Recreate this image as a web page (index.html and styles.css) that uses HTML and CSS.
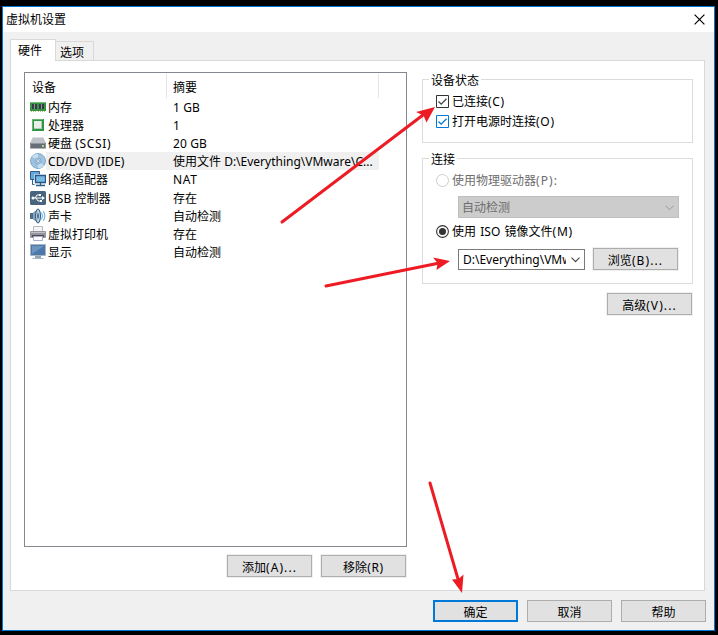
FILE: index.html
```html
<!DOCTYPE html>
<html lang="zh-CN">
<head>
<meta charset="utf-8">
<title>虚拟机设置</title>
<link rel="stylesheet" href="styles.css">
</head>
<body>
<div class="window">
  <header class="titlebar">
    <span>虚拟机设置</span>
    <svg class="close" width="11" height="11" viewBox="0 0 11 11"><path d="M.6.6l9.800 9.800M10.400.6L.6 10.400" stroke="#000" stroke-width="1.200"/></svg>
  </header>
  <nav class="tabs">
    <div class="tab active">硬件</div>
    <div class="tab">选项</div>
  </nav>
  <main class="panel">
    <section class="left">
      <div class="list">
        <div class="list-head"><span class="name">设备</span><span class="sum">摘要</span></div>
        <div class="row">
          <svg class="icon" viewBox="0 0 16 16"><path d="M0 3h16v9H0z" fill="#369443"/><path d="M0 3h16v1H0z" fill="#73be72"/><path d="M2 5h2v5H2zM5 5h2v5H5zM9 5h2v5H9zM12 5h2v5h-2z" fill="#353b43"/><path d="M4 5h1v5H4zM11 5h1v5h-1z" fill="#8c939b"/><path d="M1 12.500h6M8 12.500h7" stroke="#b9c07c" stroke-dasharray="1 1"/></svg>
          <span class="name">内存</span><span class="sum"><i>1 GB</i></span></div>
        <div class="row">
          <svg class="icon" viewBox="0 0 16 16"><path d="M2 2h12v12H2z" fill="#2d9748"/><path d="M2.500 13V2.500H13" stroke="#69b66e" fill="none"/><path d="M4 4h8v8H4z" fill="#e9eee9"/><path d="M4 11.500h8M11.500 4v8" stroke="#b5c9b7"/></svg>
          <span class="name">处理器</span><span class="sum"><i>1</i></span></div>
        <div class="row">
          <svg class="icon" viewBox="0 0 16 16"><path d="M3 2h10l3 6H0z" fill="#bec3c9"/><path d="M3.500 2.500h9" stroke="#dde0e3"/><path d="M0 8h16v5.500H0z" fill="#656e79"/><path d="M.5 13V8.500h15V13" fill="none" stroke="#8d949d"/><path d="M12 10h2v2h-2z" fill="#a6da83"/></svg>
          <span class="name">硬盘 <i class="wide">(SCSI)</i></span><span class="sum"><i>20 GB</i></span></div>
        <div class="row selected">
          <svg class="icon" viewBox="0 0 16 16"><circle cx="8" cy="8" r="7.500" fill="#9fc2de" stroke="#7fa9ca"/><path d="M8 8L2 3.500A7.200 7.200 0 018 .8zM8 8l6 4.500A7.200 7.200 0 018 15.200z" fill="#c6dded"/><circle cx="8" cy="8" r="3" fill="#b8d4e9" stroke="#6e9ec3" stroke-width=".7"/><circle cx="8" cy="8" r="1.400" fill="#fff" stroke="#5a8cb4" stroke-width=".7"/></svg>
          <span class="name"><i class="tight">CD/DVD (IDE)</i></span><span class="sum">使用文件 <i class="path">D:\Everything\VMware\C...</i></span></div>
        <div class="row">
          <svg class="icon" viewBox="0 0 16 16"><path d="M.5.500h9v8h-9z" fill="#65a8dd" stroke="#315c83"/><path d="M2.500 9v4.500h3" stroke="#315c83" fill="none"/><path d="M5.500 4.500h10v8h-10z" fill="#80bfe9" stroke="#eef5fa" stroke-width="2.500"/><path d="M5.500 4.500h10v7h-10z" fill="#78b9e5" stroke="#285783" stroke-width="1.300"/><path d="M6 14.500h9M10.500 12v3" stroke="#315c83" stroke-width="1.300" fill="none"/></svg>
          <span class="name">网络适配器</span><span class="sum"><i class="wide">NAT</i></span></div>
        <div class="row">
          <svg class="icon" viewBox="0 0 16 16"><rect y="1" width="16" height="14" rx="1.500" fill="#49647f"/><path d="M2 8h11M5 8l2-3h3M6 8l2 3h3" stroke="#fff" fill="none"/><circle cx="3" cy="8" r="1.500" fill="#fff"/><path d="M12 6l3 2-3 2zM9 4h2v2H9zM10 10h2v2h-2z" fill="#fff"/></svg>
          <span class="name"><i class="tight">USB</i> 控制器</span><span class="sum">存在</span></div>
        <div class="row">
          <svg class="icon" viewBox="0 0 16 16"><path d="M0 5h3l5-4v14l-5-4H0z" fill="#506d88"/><path d="M3 5l4-3v12l-4-3z" fill="#86a4bd"/><ellipse cx="8" cy="8" rx="2.500" ry="7" fill="#b4cce0" stroke="#33597c"/><ellipse cx="8" cy="8" rx="1" ry="3" fill="#46709a"/><path d="M11.500 4.500q2 3.500 0 7M13.500 3q3 5 0 10" stroke="#5cabdf" fill="none"/></svg>
          <span class="name">声卡</span><span class="sum">自动检测</span></div>
        <div class="row">
          <svg class="icon" viewBox="0 0 16 16"><path d="M3.500.500h9v5h-9z" fill="#f5f5f7" stroke="#b9bac0"/><rect y="5" width="16" height="7" rx="1" fill="#93949e"/><path d="M1 6.500h14" stroke="#c1c2c9"/><path d="M2 9h12v2H2z" fill="#4a4c56"/><path d="M3.500 10.500h9v4h-9z" fill="#fafaff" stroke="#a9acc9"/></svg>
          <span class="name">虚拟打印机</span><span class="sum">存在</span></div>
        <div class="row">
          <svg class="icon" viewBox="0 0 16 16"><path d="M.5.500h15v11H.5z" fill="#4d79aa" stroke="#a9b5c2"/><path d="M2 2h12L2 10z" fill="#6b94bf"/><path d="M5 12h6v2H5z" fill="#93a3b4"/><path d="M2.500 14.500h11" stroke="#a7b5c4"/></svg>
          <span class="name">显示</span><span class="sum">自动检测</span></div>
      </div>
      <div class="list-actions">
        <div class="btn">添加<i class="wider">(A)...</i></div>
        <div class="btn">移除<i class="wide">(R)</i></div>
      </div>
    </section>
    <section class="right">
      <fieldset class="status">
        <legend>设备状态</legend>
        <div class="option"><svg class="mark" viewBox="0 0 13 13"><path d="M.5.5h12v12H.5z" fill="#fff" stroke="#333"/><path d="M2.500 6.500l2.700 2.700 5.300-5.400" fill="none" stroke="#444" stroke-width="1.300"/></svg><span>已连接<i class="wide">(C)</i></span></div>
        <div class="option"><svg class="mark" viewBox="0 0 13 13"><path d="M.5.5h12v12H.5z" fill="#fff" stroke="#0078d7"/><path d="M2.500 6.500l2.700 2.700 5.300-5.400" fill="none" stroke="#0078d7" stroke-width="1.300"/></svg><span>打开电源时连接<i class="wide">(O)</i></span></div>
      </fieldset>
      <fieldset class="connection">
        <legend>连接</legend>
        <div class="option disabled"><svg class="mark" viewBox="0 0 13 13"><circle cx="6.500" cy="6.500" r="6" fill="#fff" stroke="#ccc"/></svg><span>使用物理驱动器<i class="wider">(P):</i></span></div>
        <div class="combo off"><span>自动检测</span><svg width="9" height="6" viewBox="0 0 9 6"><path d="M.5.700l4 4 4-4" fill="none" stroke="#999"/></svg></div>
        <div class="option iso"><svg class="mark" viewBox="0 0 13 13"><circle cx="6.500" cy="6.500" r="5.900" fill="#fff" stroke="#333" stroke-width="1.100"/><circle cx="6.500" cy="6.500" r="3.500" fill="#333"/></svg><span>使用 <i class="iso-word">ISO</i> 镜像文件<i class="wide">(M)</i></span></div>
        <div class="file">
          <div class="combo"><span><i class="path">D:\Everything\VMw</i></span><svg width="9" height="6" viewBox="0 0 9 6"><path d="M.5.700l4 4 4-4" fill="none" stroke="#444" stroke-width="1.100"/></svg></div>
          <div class="btn">浏览<i class="wider">(B)...</i></div>
        </div>
      </fieldset>
      <div class="btn advanced">高级<i class="wider">(V)...</i></div>
    </section>
  </main>
  <footer class="footer">
    <div class="btn primary">确定</div>
    <div class="btn">取消</div>
    <div class="btn">帮助</div>
  </footer>
</div>
<svg class="arrows" width="718" height="635" viewBox="0 0 718 635">
  <g stroke="#ed1c24" stroke-width="3" stroke-linecap="round">
    <path d="M282 222L423 115"/><path d="M326 286L437 263.500"/><path d="M430 483L458 579"/>
  </g>
  <g fill="#ed1c24">
    <path d="M435 107l-8.500 15.500-3-7-7.500-3.500z"/><path d="M450 261l-13.500 9 1-7-4.500-5.500z"/><path d="M462 593l-10-13.500 6.500-.5 5-4.500z"/>
  </g>
</svg>
</body>
</html>
```
FILE: styles.css
```css
* { box-sizing: border-box; }
body {
  margin: 0;
  width: 718px;
  height: 635px;
  padding: 6px 0 0 2px;
  overflow: hidden;
  background: #000;
  color: #000;
  font: 12px/18px "Noto Sans", "Noto Sans CJK SC", sans-serif;
}
i { font-style: normal; letter-spacing: .1px; }
i.tight { letter-spacing: .1px; }
i.wide { letter-spacing: .7px; }
i.wider { letter-spacing: 1.1px; }
i.path { letter-spacing: 0; }
svg { display: block; flex: none; }
.window {
  width: 713px;
  height: 625px;
  border: 1px solid #0078d7;
  background: #f0f0f0;
}
.titlebar {
  display: flex;
  justify-content: space-between;
  align-items: center;
  height: 25px;
  padding: 0 9px 0 3px;
  background: #fff;
}
.tabs {
  display: flex;
  align-items: flex-end;
  height: 28px;
  padding-left: 7px;
}
.tab {
  height: 19px;
  width: 38px;
  padding-left: 4px;
  border: 1px solid #d9d9d9;
  border-width: 1px 1px 0 0;
  line-height: 21px;
}
.tab.active {
  z-index: 1;
  width: 46px;
  height: 22px;
  margin-bottom: -1px;
  padding-left: 7px;
  border-left-width: 1px;
  background: #fff;
  line-height: 21px;
}
.panel {
  display: flex;
  gap: 15px;
  width: 695px;
  height: 531px;
  margin-left: 7px;
  padding: 11px 11px 0 13px;
  border: 1px solid #d9d9d9;
  background: #fff;
}
.left { width: 383px; }
.list {
  height: 475px;
  border: 1px solid #828790;
}
.list-head {
  display: flex;
  width: 354px;
  height: 24px;
  margin: 1px 0 0;
  border-right: 1px solid #e5e5e5;
  line-height: 28px;
}
.list-head .name {
  width: 142px;
  padding-left: 7px;
  border-right: 1px solid #e5e5e5;
}
.list-head .sum { padding-left: 6px; }
.row {
  display: flex;
  align-items: center;
  height: 18.100px;
  padding-left: 5px;
  white-space: nowrap;
}
.icon { width: 16px; height: 16px; }
.row .name, .row .sum {
  height: 18px;
  line-height: 20px;
}
.row .name { width: 121px; padding-left: 2px; }
.row .sum { width: 212px; padding-left: 6px; }
.selected .name, .selected .sum { background: #f0f0f0; }
.list-actions {
  display: flex;
  justify-content: flex-end;
  gap: 9px;
  padding-top: 8px;
  padding-right: 1px;
}
.btn {
  display: flex;
  justify-content: center;
  align-items: center;
  width: 85px;
  height: 22px;
  padding-top: 3px;
  border: 1px solid #adadad;
  background: #e1e1e1;
  box-shadow: 0 0 0 1px #f0f0f0;
}
.primary { border: 2px solid #0078d7; }
.right { width: 271px; padding-top: 7px; }
fieldset {
  display: grid;
  align-content: start;
  min-width: 0;
  margin: 0;
  padding: 0 0 0 13px;
  border: 1px solid #dcdcdc;
}
legend {
  height: 1px;
  margin-left: -7px;
  padding: 0 2px;
  background: #fff;
  line-height: 3px;
}
.status { height: 64px; padding-top: 12px; }
.connection { height: 126px; margin-top: 15px; padding-top: 12px; }
.option {
  display: flex;
  align-items: center;
  gap: 3px;
  height: 20px;
}
.mark { width: 13px; height: 13px; margin-top: -1px; }
.disabled { color: #6d6d6d; height: 19px; }
.combo {
  display: flex;
  align-items: center;
  justify-content: space-between;
  width: 127px;
  height: 21px;
  padding: 1px 4px 0;
  border: 1px solid #7a7a7a;
  background: #fff;
}
.combo span { width: 103px; overflow: hidden; white-space: nowrap; }
.combo.off {
  width: 221px;
  height: 22px;
  margin: 6px 0 0 22px;
  padding: 2px 4px 0 3px;
  border-color: #bfbfbf;
  background: #ccc;
  color: #6d6d6d;
}
.iso { height: 18px; margin-top: 5px; }
.iso-word { margin: 0 1px; }
.file {
  display: flex;
  align-items: center;
  gap: 8px;
  margin: 7px 0 0 22px;
}
.advanced { margin: 9px 0 0 185px; }
.footer {
  display: flex;
  justify-content: flex-end;
  gap: 9px;
  padding: 9px 8px 0 0;
}
.arrows { position: absolute; left: 0; top: 0; }
```
